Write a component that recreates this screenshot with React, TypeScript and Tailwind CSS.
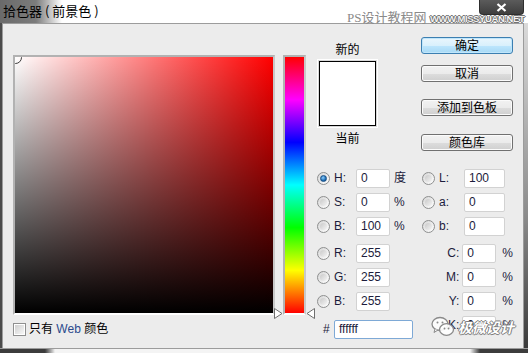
import React from "react";

function Radio({ checked = false }: { checked?: boolean }) {
  return (
    <div className="w-[13px] h-[13px] rounded-full border border-[#8e8f8f] bg-[linear-gradient(135deg,#d6d6d6,#ffffff)] flex items-center justify-center shrink-0">
      {checked ? (
        <div className="w-[7px] h-[7px] rounded-full bg-[radial-gradient(circle_at_40%_35%,#8fd0ff,#1f6fb5_60%,#0b3f75)] border border-[#184f86]" />
      ) : (
        <div className="w-[7px] h-[7px] rounded-full bg-[linear-gradient(135deg,#c9c9c9,#f4f4f4)]" />
      )}
    </div>
  );
}

function Field({ value, w = 34, blue = false }: { value: string; w?: number; blue?: boolean }) {
  return (
    <div
      className={
        "h-[19px] bg-white border rounded-[2px] flex items-center pl-[4px] text-[12px] text-[#1c1c3c] shrink-0 " +
        (blue ? "border-[#7ea9d6]" : "border-[#d2d2d2]")
      }
      style={{ width: w }}
    >
      {value}
    </div>
  );
}

function Btn({ label, primary = false }: { label: string; primary?: boolean }) {
  return (
    <div
      className={
        "w-[92px] h-[17px] rounded-[3px] border flex items-center justify-center text-[12px] text-black leading-none " +
        (primary
          ? "border-[#3c7fb1] bg-[linear-gradient(to_bottom,#eaf6fd_0%,#d9f0fc_50%,#bee6fd_51%,#a7d9f5_100%)] shadow-[inset_0_0_0_1px_#c0e6fb]"
          : "border-[#707070] bg-[linear-gradient(to_bottom,#f2f2f2_0%,#ebebeb_50%,#dddddd_51%,#cfcfcf_100%)] shadow-[inset_0_0_0_1px_#fbfbfb]")
      }
    >
      {label}
    </div>
  );
}

function Row1({ label, value, unit, checked = false }: { label: string; value: string; unit: string; checked?: boolean }) {
  return (
    <div className="h-[24px] flex items-center">
      <Radio checked={checked} />
      <div className="w-[26px] pl-[4px] text-[12px] text-[#1c1c3c]">{label}</div>
      <Field value={value} />
      <div className="ml-[4px] text-[12px] text-[#1c1c3c]">{unit}</div>
    </div>
  );
}

function Row2({ label, value }: { label: string; value: string }) {
  return (
    <div className="h-[24px] flex items-center">
      <Radio />
      <div className="w-[29px] pl-[4px] text-[12px] text-[#1c1c3c]">{label}</div>
      <Field value={value} w={41} />
    </div>
  );
}

function RowC({ label, value }: { label: string; value: string }) {
  return (
    <div className="h-[24px] flex items-center">
      <div className="w-[41px] pr-[3px] text-right text-[12px] text-[#1c1c3c]">{label}</div>
      <Field value={value} />
      <div className="ml-[6px] text-[12px] text-[#1c1c3c]">%</div>
    </div>
  );
}

export default function App() {
  return (
    <div className="w-[528px] h-[353px] bg-white flex flex-col overflow-hidden relative font-['Liberation_Sans','Noto_Sans_CJK_SC',sans-serif]">
      {/* title bar */}
      <div className="h-[23px] flex items-start bg-[linear-gradient(to_right,#6a6a6a_0px,#7c7c7c_36px,#ffffff_62px,#ffffff_100%)]">
        <div className="pl-[3px] pt-[1px] text-[13px] text-black leading-[19px] font-['Noto_Sans_CJK_SC',sans-serif]">
          拾色器 ( 前景色 )
        </div>
      </div>

      {/* close button */}
      <div className="absolute right-[4px] top-0 w-[45px] h-[15px] rounded-b-[4px] border border-t-0 border-[#2e2e2e] bg-[linear-gradient(to_bottom,#5b5b5b,#3e3e3e)] flex items-center justify-center">
        <svg width="11" height="9" viewBox="0 0 11 9">
          <path d="M1.5 1 L9.5 8 M9.5 1 L1.5 8" stroke="#ffffff" strokeWidth="2.2" />
        </svg>
      </div>

      {/* top watermark */}
      <div className="absolute left-[347px] top-[10px] text-[13px] text-[#8a8a8a] font-['Liberation_Serif','Noto_Sans_CJK_SC',serif] leading-[16px]">
        PS设计教程网
      </div>
      <div className="absolute left-[430px] top-[13px] text-[9.5px] font-bold tracking-[-0.4px] text-[#f2f2f2] leading-[12px] [text-shadow:0_0_1px_#555,1px_0_0_#777,-1px_0_0_#777,0_1px_0_#777,0_-1px_0_#777]">
        WWW.MISSYUAN.NET
      </div>

      {/* body */}
      <div className="flex h-[325px]">
        <div className="w-[2px] bg-[#4b4b4b]" />
        <div className="flex-1 border-t border-l border-r border-[#9c9c9c] bg-[#ececec] flex items-start">
          {/* left column */}
          <div className="ml-[10px] mt-[31px] flex flex-col">
            <div className="w-[262px] h-[260px] border-t-2 border-l-2 border-[#b2b2b2] border-r-2 border-r-[#c8c8c8] border-b-2 border-b-white">
              <div className="w-full h-full relative overflow-hidden bg-[linear-gradient(to_right,#ffffff,#ff0000)]">
                <div className="absolute inset-0 bg-[linear-gradient(to_bottom,rgba(0,0,0,0),#000000)]" />
                <div className="absolute left-[-6px] top-[-6px] w-[13px] h-[13px] rounded-full border-[1.5px] border-[#3c3c3c]" />
              </div>
            </div>
            <div className="mt-[7px] h-[14px] flex items-center">
              <div className="w-[13px] h-[13px] border border-[#8f8f8f] bg-white p-[1px]">
                <div className="w-full h-full bg-[linear-gradient(135deg,#cfcfcf,#f7f7f7)]" />
              </div>
              <div className="ml-[3px] text-[12px] text-black leading-none">
                只有 <span className="text-[#2a4a8c]">Web</span> 颜色
              </div>
            </div>
          </div>

          {/* hue slider */}
          <div className="ml-[8px] mt-[31px] w-[23px] h-[260px] relative">
            <div className="w-full h-full border-t-2 border-l-2 border-[#b2b2b2] border-r-2 border-r-[#c8c8c8] border-b-2 border-b-white">
              <div className="w-full h-full bg-[linear-gradient(to_bottom,#ff0000_0%,#ff00ff_16.67%,#0000ff_33.33%,#00ffff_50%,#00ff00_66.67%,#ffff00_83.33%,#ff0000_100%)]" />
            </div>
            <svg className="absolute left-[-9px] top-[253px]" width="9" height="11" viewBox="0 0 9 11">
              <polygon points="0.5,0.5 8,5.5 0.5,10.5" fill="#ffffff" stroke="#6f6f6f" strokeWidth="1" />
            </svg>
            <svg className="absolute left-[23px] top-[253px]" width="9" height="11" viewBox="0 0 9 11">
              <polygon points="8.5,0.5 1,5.5 8.5,10.5" fill="#ffffff" stroke="#6f6f6f" strokeWidth="1" />
            </svg>
          </div>

          {/* right area */}
          <div className="ml-[11px] w-[196px] flex flex-col">
            <div className="h-[142px] flex items-start">
              <div className="w-[61px] mt-[18px] flex flex-col items-center">
                <div className="h-[16px] text-[12px] leading-[16px] text-black">新的</div>
                <div className="mt-[1px] w-[61px] h-[69px] border border-white bg-[#d8d8d8] p-[1px]">
                  <div className="w-full h-full border border-black flex flex-col">
                    <div className="flex-1 bg-white" />
                    <div className="flex-1 bg-white" />
                  </div>
                </div>
                <div className="mt-[3px] h-[16px] text-[12px] leading-[16px] text-black">当前</div>
              </div>
              <div className="ml-[43px] mt-[13px] flex flex-col">
                <Btn label="确定" primary />
                <div className="mt-[11px]"><Btn label="取消" /></div>
                <div className="mt-[17px]"><Btn label="添加到色板" /></div>
                <div className="mt-[18px]"><Btn label="颜色库" /></div>
              </div>
            </div>

            <div className="flex">
              <div className="w-[105px] flex flex-col">
                <Row1 label="H:" value="0" unit="度" checked />
                <Row1 label="S:" value="0" unit="%" />
                <Row1 label="B:" value="100" unit="%" />
                <div className="h-[3px]" />
                <Row1 label="R:" value="255" unit="" />
                <Row1 label="G:" value="255" unit="" />
                <Row1 label="B:" value="255" unit="" />
                <div className="mt-[4px] h-[24px] flex items-center">
                  <div className="w-[17px] pl-[6px] text-[12px] text-[#1c1c3c]">#</div>
                  <Field value="ffffff" w={79} blue />
                </div>
              </div>
              <div className="w-[91px] flex flex-col">
                <Row2 label="L:" value="100" />
                <Row2 label="a:" value="0" />
                <Row2 label="b:" value="0" />
                <div className="h-[3px]" />
                <RowC label="C:" value="0" />
                <RowC label="M:" value="0" />
                <RowC label="Y:" value="0" />
                <RowC label="K:" value="0" />
              </div>
            </div>
          </div>
        </div>
        <div className="w-[4px] bg-[linear-gradient(to_bottom,#dadada,#8a8a8a_60%,#3a3a3a)]" />
      </div>
      {/* bottom frame */}
      <div className="h-[5px] border-t border-[#9c9c9c] bg-[linear-gradient(to_right,#3c3c3c_0px,#3c3c3c_45px,#f4f4f4_55px,#f4f4f4_470px,#3c3c3c_480px)]" />

      {/* bottom watermark */}
      <div className="absolute left-[431px] top-[316px] flex items-center">
        <svg width="24" height="22" viewBox="0 0 24 22">
          <ellipse cx="9" cy="8" rx="8" ry="6.5" fill="rgba(255,255,255,0.85)" stroke="#8a8a8a" strokeWidth="1.3" />
          <ellipse cx="15.5" cy="13.5" rx="7" ry="5.8" fill="rgba(255,255,255,0.9)" stroke="#8a8a8a" strokeWidth="1.3" />
          <circle cx="6.5" cy="6.5" r="1" fill="#8a8a8a" />
          <circle cx="11.5" cy="6.5" r="1" fill="#8a8a8a" />
          <circle cx="13.5" cy="12.5" r="0.9" fill="#8a8a8a" />
          <circle cx="17.5" cy="12.5" r="0.9" fill="#8a8a8a" />
          <path d="M4 13 L3 16.5 L7 14" fill="rgba(255,255,255,0.85)" stroke="#8a8a8a" strokeWidth="1" />
        </svg>
        <div className="ml-[3px] text-[14px] font-bold italic text-white leading-[18px] font-['Noto_Sans_CJK_SC',sans-serif] [text-shadow:1px_0_0_#7a7a7a,-1px_0_0_#7a7a7a,0_1px_0_#7a7a7a,0_-1px_0_#7a7a7a]">
          极微设计
        </div>
      </div>
    </div>
  );
}
